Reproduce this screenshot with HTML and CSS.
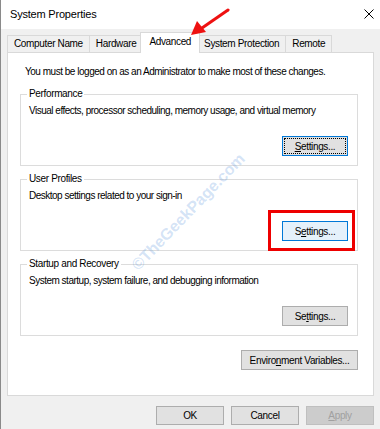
FILE: index.html
```html
<!DOCTYPE html>
<html>
<head>
<meta charset="utf-8">
<link rel="stylesheet" href="styles.css">
</head>
<body>
<div class="window">
  <div class="titlebar">
    <span class="title">System Properties</span>
    <svg class="close" width="10" height="10" viewBox="0 0 10 10"><path d="M0.5 0.5 L9.5 9.5 M9.5 0.5 L0.5 9.5" stroke="#000" stroke-width="1" fill="none"/></svg>
  </div>
  <div class="body">
    <div class="tabs">
      <div class="tab">Computer Name</div>
      <div class="tab">Hardware</div>
      <div class="tab selected">Advanced</div>
      <div class="tab">System Protection</div>
      <div class="tab">Remote</div>
    </div>
    <div class="panel">
      <p class="notice">You must be logged on as an Administrator to make most of these changes.</p>
      <fieldset class="group">
        <legend>Performance</legend>
        <p class="desc">Visual effects, processor scheduling, memory usage, and virtual memory</p>
        <div class="row"><button class="btn focused"><span class="focusring"><u>S</u>ettings...</span></button></div>
      </fieldset>
      <fieldset class="group">
        <legend>User Profiles</legend>
        <p class="desc">Desktop settings related to your sign-in</p>
        <div class="row"><button class="btn hilite">S<u>e</u>ttings...</button></div>
      </fieldset>
      <fieldset class="group">
        <legend>Startup and Recovery</legend>
        <p class="desc">System startup, system failure, and debugging information</p>
        <div class="row"><button class="btn">Se<u>t</u>tings...</button></div>
      </fieldset>
      <div class="envrow"><button class="btn env">Enviro<u>n</u>ment Variables...</button></div>
      <div class="watermark">©TheGeekPage.com</div>
    </div>
    <div class="footer">
      <button class="btn foot">OK</button>
      <button class="btn foot">Cancel</button>
      <button class="btn foot disabled"><u>A</u>pply</button>
    </div>
  </div>
  <svg class="arrow" width="50" height="40" viewBox="0 0 50 40">
    <path d="M38 10 L12 28" stroke="#ee1111" stroke-width="3" fill="none" stroke-linecap="round"/>
    <path d="M1 35 L7 21 L16 32 Z" fill="#ee1111"/>
  </svg>
</div>
</body>
</html>
```
FILE: styles.css
```css
* { box-sizing: border-box; }
html, body { margin: 0; padding: 0; }
body {
  width: 380px;
  height: 429px;
  overflow: hidden;
  font-family: "Liberation Sans", Arial, sans-serif;
  font-size: 10px;
  letter-spacing: -0.35px;
  color: #000;
  background: #f0f0f0;
}
.window {
  position: relative;
  width: 380px;
  height: 429px;
  border-left: 1px solid #8a8a8a;
  background: #f0f0f0;
}
.titlebar {
  height: 29px;
  background: #fff;
  display: flex;
  align-items: center;
  justify-content: space-between;
  padding: 0 6px 2px 9px;
}
.title { font-size: 11px; letter-spacing: -0.2px; }
.close { display: block; margin-top: 1px; }
.body {
  padding: 3px 6px 0 6px;
}
.tabs {
  display: flex;
  height: 20px;
  align-items: flex-end;
  position: relative;
  z-index: 2;
}
.tab {
  height: 17px;
  line-height: 16px;
  padding: 0 6px;
  border: 1px solid #d9d9d9;
  border-bottom: none;
  margin-left: -1px;
  background: #f0f0f0;
  white-space: nowrap;
}
.tab:first-child { margin-left: 0; }
.tab.selected {
  height: 21px;
  line-height: 18px;
  margin: 0 -2px 0 -3px;
  padding: 0 8px;
  background: #fff;
  position: relative;
  z-index: 3;
  margin-bottom: -1px;
}
.panel {
  position: relative;
  background: #fff;
  border: 1px solid #d9d9d9;
  height: 344px;
  padding: 12px 15px 0 12px;
}
.notice {
  margin: 0 0 8px 5px;
  line-height: 14px;
  white-space: nowrap;
  letter-spacing: -0.48px;
}
.group {
  margin: 0 0 6px 0;
  padding: 0 9px 9px 8px;
  border: 1px solid #dcdcdc;
  min-width: 0;
}
.group legend {
  padding: 0 2px;
  margin-left: -2px;
  line-height: 14px;
}
.desc {
  margin: 3px 0 0 0;
  line-height: 14px;
  white-space: nowrap;
  letter-spacing: -0.5px;
}
.row {
  display: flex;
  justify-content: flex-end;
  margin-top: 18px;
}
.btn {
  font-family: "Liberation Sans", Arial, sans-serif;
  font-size: 10px;
  letter-spacing: -0.35px;
  color: #000;
  height: 20px;
  width: 66px;
  padding: 0;
  background: #e1e1e1;
  border: 1px solid #adadad;
  border-radius: 0;
  position: relative;
  white-space: nowrap;
}
.btn.focused {
  border-color: #0078d7;
  padding: 1px;
}
.focusring {
  display: flex;
  align-items: center;
  justify-content: center;
  height: 100%;
  width: 100%;
  border: 1px dotted #000;
}
.btn.hilite {
  background: #e5f1fb;
  border-color: #0078d7;
}
.btn.hilite::after {
  content: "";
  position: absolute;
  top: -12px;
  left: -15px;
  right: -8px;
  bottom: -11px;
  border: 3px solid #ee0000;
}
.envrow {
  display: flex;
  justify-content: flex-end;
  margin-top: 14px;
}
.btn.env { width: 117px; }
.footer {
  display: flex;
  justify-content: flex-end;
  gap: 7px;
  margin-top: 10px;
  padding-right: 0;
}
.btn.foot { width: 68px; height: 19px; }
.btn.disabled {
  background: #cccccc;
  border-color: #bfbfbf;
  color: #a0a0a0;
}
.watermark {
  position: absolute;
  left: 103px;
  top: 150px;
  font-size: 16px;
  font-weight: bold;
  letter-spacing: 0;
  color: rgba(110, 160, 225, 0.3);
  transform: rotate(-46deg);
  white-space: nowrap;
  pointer-events: none;
}
.arrow {
  position: absolute;
  left: 189px;
  top: 0;
  z-index: 5;
}
```
